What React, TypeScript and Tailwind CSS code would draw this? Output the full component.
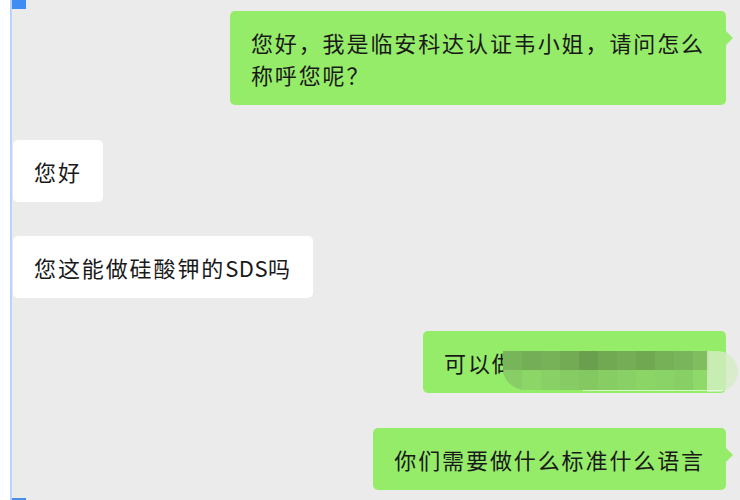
const font = { fontFamily: '"Noto Sans CJK SC", "Noto Sans", sans-serif' };

// mosaic cells over the redacted part of a reply
const topRow = ["#78b45a", "#74ae56", "#77b259", "#72ab54", "#6a9f4d", "#71a953", "#74ad55", "#70a852", "#76b158", "#79b55a", "#7fbd5f"];
const bottomRow = ["#88cd65", "#8cd668", "#89d066", "#86cb63", "#84c862", "#87cd64", "#89d166", "#8bd567", "#8ad366", "#88d065", "#8ed96a"];

function Bubble({ side, children, tail = false, className = "" }: { side: "left" | "right"; children: React.ReactNode; tail?: boolean; className?: string }) {
  const bg = side === "right" ? "bg-[#95ec69]" : "bg-white";
  return (
    <div className={`relative rounded-[5px] px-[21px] py-[15px] text-[22px] leading-[32px] tracking-[1.9px] text-[#191919] ${bg} ${className}`}>
      {children}
      {tail && (
        <span className="absolute right-[-7px] top-[20px] h-0 w-0 border-y-[7px] border-l-[7px] border-y-transparent border-l-[#95ec69]" />
      )}
    </div>
  );
}

export default function App() {
  return (
    <div className="flex h-[500px] w-[740px] overflow-hidden bg-white" style={font}>
      <div className="w-[10px] shrink-0 bg-white" />
      <div className="w-[2px] shrink-0 bg-[#b6d5fb]" />
      <div className="relative flex flex-1 flex-col bg-[#ebebeb] pr-[14px]">
        <div className="absolute left-0 top-0 h-[9px] w-[14px] bg-[#3f8cf5]" />
        <div className="absolute bottom-0 left-0 h-[2px] w-[14px] bg-[#4a8fe6]" />

        <div className="mt-[11px] flex justify-end">
          <Bubble side="right" tail>
            您好，我是临安科达认证韦小姐，请问怎么
            <br />
            称呼您呢？
          </Bubble>
        </div>

        <div className="mt-[35px] flex justify-start pl-[1px]">
          <Bubble side="left">您好</Bubble>
        </div>

        <div className="mt-[34px] flex justify-start pl-[1px]">
          <Bubble side="left">
            您这能做硅酸钾的<span className="tracking-[0.5px]">SDS</span>吗
          </Bubble>
        </div>

        <div className="mt-[33px] flex justify-end">
          <div className="relative h-[62px] w-[303px]">
            <Bubble side="right" className="h-[62px] w-[303px] overflow-hidden">
              可以做
            </Bubble>
            <div className="absolute left-[80px] top-[20px] flex h-[39px] w-[206px] flex-col overflow-hidden rounded-bl-[22px]">
              <div className="flex h-[19px]">
                {topRow.map((c, i) => (
                  <div key={i} className="h-full w-[19px] shrink-0" style={{ backgroundColor: c }} />
                ))}
              </div>
              <div className="flex h-[20px]">
                {bottomRow.map((c, i) => (
                  <div key={i} className="h-full w-[19px] shrink-0" style={{ backgroundColor: c }} />
                ))}
              </div>
            </div>
            <div className="absolute right-[-12px] top-[20px] h-[41px] w-[31px] rounded-r-full bg-[#d4eec6]/80" />
            <div className="absolute bottom-[2px] left-[160px] h-[1px] w-[140px] bg-white/60" />
          </div>
        </div>

        <div className="mt-[35px] flex justify-end">
          <Bubble side="right" tail>你们需要做什么标准什么语言</Bubble>
        </div>
      </div>
    </div>
  );
}
